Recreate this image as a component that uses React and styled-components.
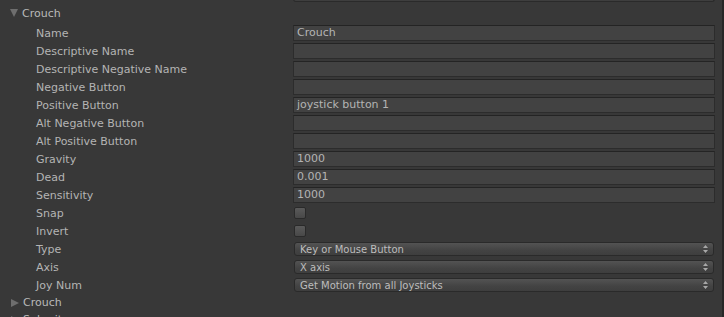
import styled, { createGlobalStyle } from 'styled-components'

const Global = createGlobalStyle`
    html, body {
        margin: 0;
        padding: 0;
        background: #383838;
    }
    body {
        font-family: "DejaVu Sans", Verdana, sans-serif;
        font-size: 11px;
        color: #b4b4b4;
    }
`;

const Panel = styled.div`
    width: 724px;
    height: 317px;
    overflow: hidden;
    background: #383838;
    display: flex;
    flex-direction: column;
    border-right: 2px solid #262626;
    box-sizing: border-box;
    padding-right: 1px;
`;

const TopStub = styled.div`
    display: flex;
    height: 4px;
    padding-left: 293px;
    padding-right: 6px;
`;

const StubPopup = styled.div`
    flex: 1;
    height: 2px;
    margin-top: -1px;
    background: #3e3e3e;
    border: 1px solid #2a2a2a;
    border-top: none;
    border-radius: 0 0 3px 3px;
`;

const Header = styled.div`
    display: flex;
    align-items: center;
    height: ${p => p.h || 20}px;
    padding-left: 10px;
    gap: 4px;
    flex-shrink: 0;
`;

const Arrow = styled.span`
    width: 0;
    height: 0;
    ${p => p.open ? `
        border-left: 4px solid transparent;
        border-right: 4px solid transparent;
        border-top: 8px solid #6e6e6e;
    ` : `
        border-top: 4px solid transparent;
        border-bottom: 4px solid transparent;
        border-left: 8px solid #6e6e6e;
        margin-left: 1px;
    `}
`;

const HeaderText = styled.span`
    color: #b8b8b8;
`;

const Row = styled.div`
    display: flex;
    align-items: center;
    height: 18px;
    flex-shrink: 0;
`;

const Label = styled.span`
    width: 257px;
    padding-left: 36px;
    white-space: nowrap;
`;

const Field = styled.div`
    flex: 1;
    margin-right: 6px;
    height: 16px;
    box-sizing: border-box;
    background: #424242;
    border: 1px solid #2c2c2c;
    border-top-color: #242424;
    padding-left: 3px;
    line-height: 14px;
    color: #b4b4b4;
    white-space: nowrap;
`;

const Check = styled.div`
    width: 12px;
    height: 12px;
    margin-left: 1px;
    box-sizing: border-box;
    border-radius: 2px;
    border: 1px solid #2a2a2a;
    background: linear-gradient(#5a5a5a, #484848);
`;

const Popup = styled.div`
    flex: 1;
    margin-left: 1px;
    margin-right: 7px;
    height: 14px;
    box-sizing: border-box;
    border: 1px solid #2a2a2a;
    border-radius: 3px;
    background: linear-gradient(#535353, #434343 60%, #3e3e3e);
    display: flex;
    align-items: center;
    justify-content: space-between;
    padding: 0 5px 0 5px;
    font-size: 10px;
    color: #bdbdbd;
`;

const Spinner = () => (
    <svg width="5" height="8" viewBox="0 0 5 8">
        <path d="M2.5 0 L5 3 L0 3 Z M0 5 L5 5 L2.5 8 Z" fill="#a8a8a8" />
    </svg>
);

const fields = [
    ['Name', 'Crouch'],
    ['Descriptive Name', ''],
    ['Descriptive Negative Name', ''],
    ['Negative Button', ''],
    ['Positive Button', 'joystick button 1'],
    ['Alt Negative Button', ''],
    ['Alt Positive Button', ''],
    ['Gravity', '1000'],
    ['Dead', '0.001'],
    ['Sensitivity', '1000'],
];

const popups = [
    ['Type', 'Key or Mouse Button'],
    ['Axis', 'X axis'],
    ['Joy Num', 'Get Motion from all Joysticks'],
];

export default function App() {
    return (
        <>
            <Global />
            <Panel>
                <TopStub><StubPopup /></TopStub>
                <Header h={22}><Arrow open /><HeaderText>Crouch</HeaderText></Header>
                {fields.map(([label, value]) => (
                    <Row key={label}>
                        <Label>{label}</Label>
                        <Field>{value}</Field>
                    </Row>
                ))}
                {['Snap', 'Invert'].map(label => (
                    <Row key={label}>
                        <Label>{label}</Label>
                        <Check />
                    </Row>
                ))}
                {popups.map(([label, value]) => (
                    <Row key={label}>
                        <Label>{label}</Label>
                        <Popup><span>{value}</span><Spinner /></Popup>
                    </Row>
                ))}
                <Header h={17}><Arrow /><HeaderText>Crouch</HeaderText></Header>
                <Header h={17}><Arrow /><HeaderText>Submit</HeaderText></Header>
            </Panel>
        </>
    )
}
